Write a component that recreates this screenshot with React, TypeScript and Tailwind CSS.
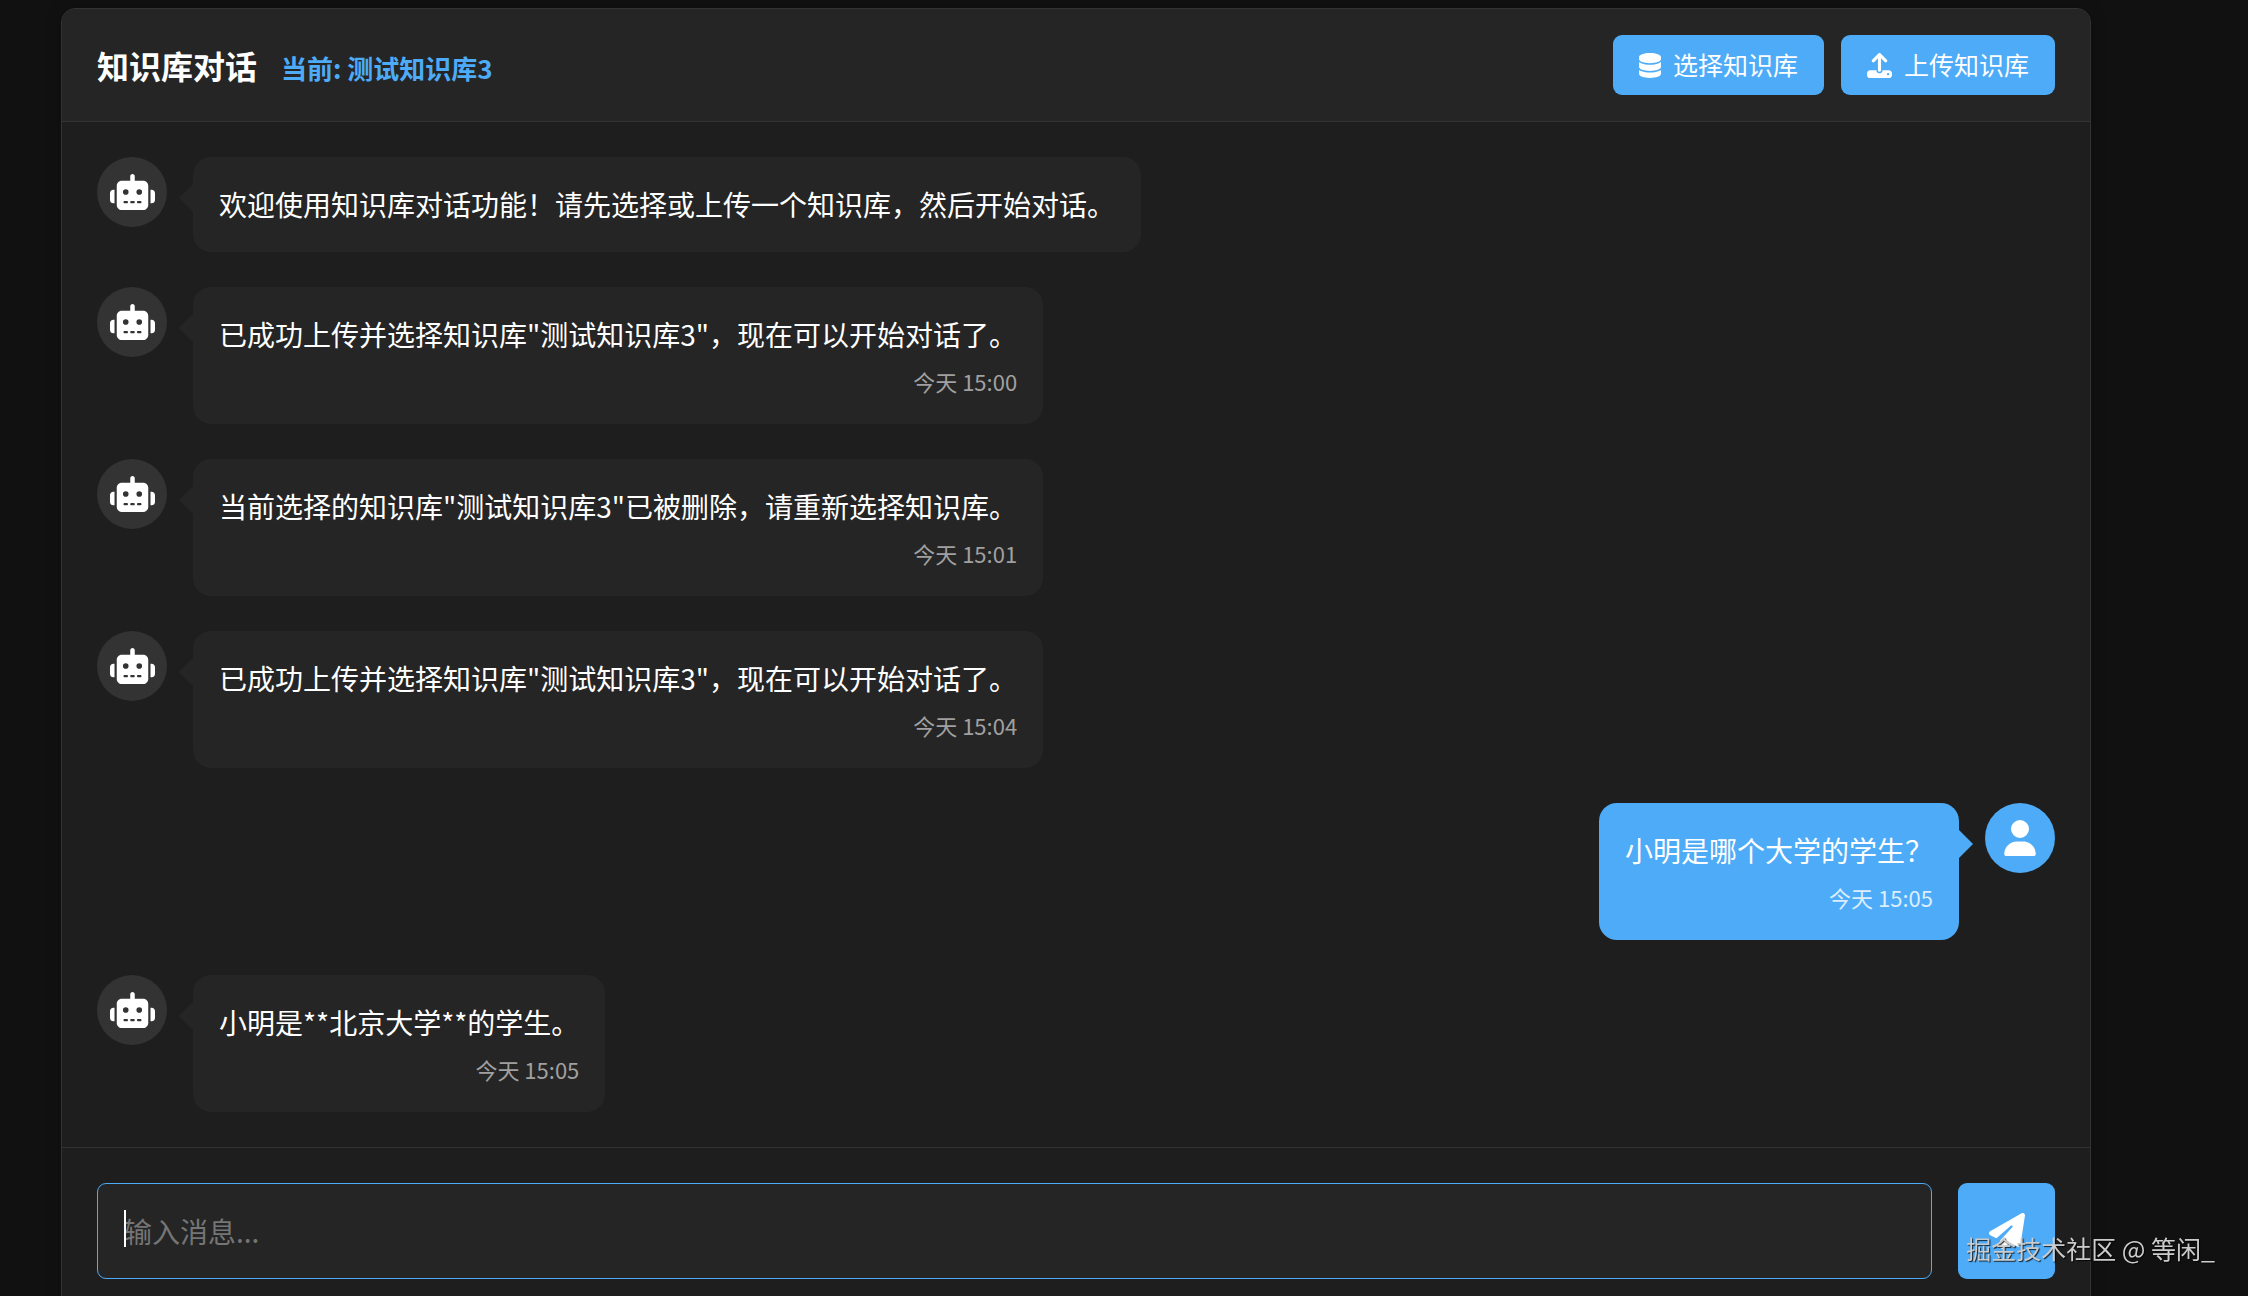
import { useState } from "react";
import { FaDatabase, FaPaperPlane, FaRobot, FaUpload, FaUser } from "react-icons/fa6";

type Message = {
  id: number;
  role: "bot" | "user";
  text: string;
  time?: string;
};

const messages: Message[] = [
  { id: 1, role: "bot", text: "欢迎使用知识库对话功能！请先选择或上传一个知识库，然后开始对话。" },
  { id: 2, role: "bot", text: '已成功上传并选择知识库"测试知识库3"，现在可以开始对话了。', time: "今天 15:00" },
  { id: 3, role: "bot", text: '当前选择的知识库"测试知识库3"已被删除，请重新选择知识库。', time: "今天 15:01" },
  { id: 4, role: "bot", text: '已成功上传并选择知识库"测试知识库3"，现在可以开始对话了。', time: "今天 15:04" },
  { id: 5, role: "user", text: "小明是哪个大学的学生？", time: "今天 15:05" },
  { id: 6, role: "bot", text: "小明是**北京大学**的学生。", time: "今天 15:05" },
];

function MessageRow({ message }: { message: Message }) {
  const isUser = message.role === "user";

  return (
    <li className={`flex items-start gap-[26px] ${isUser ? "flex-row-reverse" : ""}`}>
      <div
        className={`flex size-[70px] shrink-0 items-center justify-center rounded-full ${
          isUser ? "bg-[#4dabf7]" : "bg-[#333333]"
        }`}
      >
        {isUser ? <FaUser className="h-9 w-8" /> : <FaRobot className="h-9 w-[45px]" />}
      </div>

      <div
        className={`relative max-w-[70%] rounded-[18px] p-[26px] ${
          isUser ? "bg-[#4dabf7]" : "bg-[#252525]"
        }`}
      >
        {/* Bubble tail */}
        <span
          className={`absolute top-[27px] border-y-14 border-y-transparent ${
            isUser
              ? "left-full border-l-14 border-l-[#4dabf7]"
              : "right-full border-r-14 border-r-[#252525]"
          }`}
        />
        <p className="text-[28px] leading-[43px]">{message.text}</p>
        {message.time && (
          <time
            className={`mt-2 block text-right text-[22px] leading-[34px] ${
              isUser ? "text-[#dbeefd]" : "text-[#a0a0a0]"
            }`}
          >
            {message.time}
          </time>
        )}
      </div>
    </li>
  );
}

export default function App() {
  const [draft, setDraft] = useState("");

  return (
    <div className="h-screen overflow-hidden bg-[#111111] pt-2 pr-[157px] pl-[61px] font-['Noto_Sans_CJK_SC',sans-serif] text-white">
      <main className="rounded-[14px] border border-[#333333] bg-[#1e1e1e] shadow-[0_0_18px_rgba(0,0,0,0.2)]">
        {/* Header */}
        <header className="flex items-center justify-between rounded-t-[13px] border-b border-[#333333] bg-[#252525] px-[35px] py-[26px]">
          <div className="flex items-baseline gap-6">
            <h1 className="text-[32px] leading-[46px] font-bold">知识库对话</h1>
            <span className="text-[26px] leading-[34px] font-bold text-[#4dabf7]">当前: 测试知识库3</span>
          </div>
          <div className="flex gap-[17px]">
            <button
              type="button"
              className="flex h-[60px] items-center gap-3 rounded-[9px] bg-[#4dabf7] px-[26px] text-[25px] hover:bg-[#3793dd]"
            >
              <FaDatabase className="h-[25px] w-[22px]" />
              选择知识库
            </button>
            <button
              type="button"
              className="flex h-[60px] items-center gap-3 rounded-[9px] bg-[#4dabf7] px-[26px] text-[25px] hover:bg-[#3793dd]"
            >
              <FaUpload className="size-[25px]" />
              上传知识库
            </button>
          </div>
        </header>

        {/* Messages */}
        <ul className="flex flex-col gap-[35px] p-[35px]">
          {messages.map((message) => (
            <MessageRow key={message.id} message={message} />
          ))}
        </ul>

        {/* Composer */}
        <form
          className="flex gap-[26px] border-t border-[#333333] p-[35px]"
          onSubmit={(e) => {
            e.preventDefault();
            setDraft("");
          }}
        >
          <div className="relative flex-1">
            <input
              type="text"
              aria-label="输入消息"
              placeholder="输入消息..."
              value={draft}
              onChange={(e) => setDraft(e.target.value)}
              className="h-24 w-full rounded-[9px] border border-[#4dabf7] bg-[#252525] px-[26px] text-[28px] outline-none placeholder:text-[#757575]"
            />
            {draft === "" && (
              <span className="pointer-events-none absolute top-[27px] left-[27px] h-[37px] w-[2px] bg-white" />
            )}
          </div>
          <button
            type="submit"
            aria-label="发送"
            className="flex h-24 w-[97px] items-center justify-center rounded-[9px] bg-[#4dabf7] hover:bg-[#3793dd]"
          >
            <FaPaperPlane className="size-9" />
          </button>
        </form>
      </main>

      <div className="pointer-events-none fixed right-[33px] bottom-[30px] text-[25px] leading-[36px] text-[#cccccc] [text-shadow:1px_1px_1px_rgba(0,0,0,0.8)]">
        掘金技术社区 @ 等闲_
      </div>
    </div>
  );
}
